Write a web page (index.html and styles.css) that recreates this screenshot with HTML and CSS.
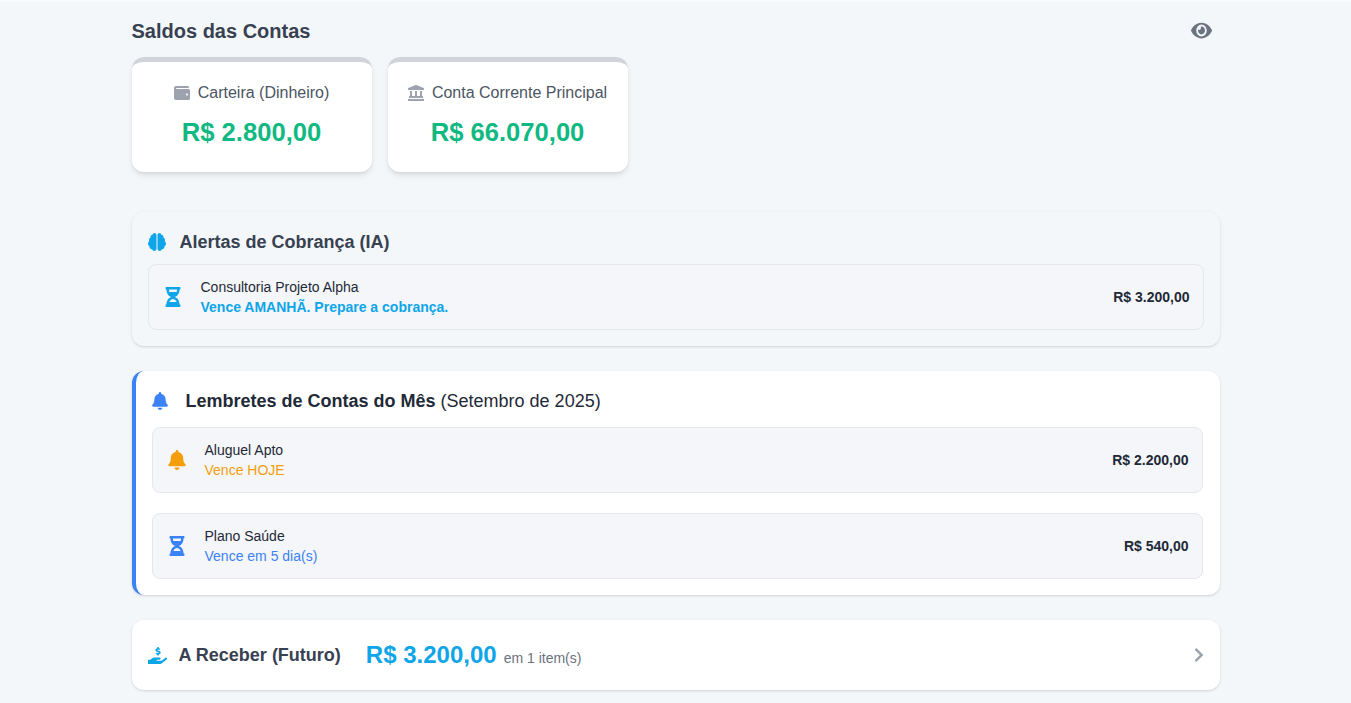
FILE: index.html
```html
<!DOCTYPE html>
<html lang="pt-BR">
<head>
    <meta charset="UTF-8">
    <title>Saldos das Contas</title>
    <link rel="stylesheet" href="styles.css">
</head>
<body>
    <div class="top-edge"></div>
    <main class="container">
        <div class="balance-head">
            <h2>Saldos das Contas</h2>
            <svg class="eye" viewBox="0 0 576 512" preserveAspectRatio="none"><path d="M572.52 241.4C518.29 135.59 410.93 64 288 64S57.68 135.64 3.48 241.41a32.35 32.35 0 0 0 0 29.19C57.71 376.41 165.07 448 288 448s230.32-71.64 284.52-177.41a32.35 32.35 0 0 0 0-29.19zM288 400a144 144 0 1 1 144-144 143.93 143.93 0 0 1-144 144zm0-240a95.31 95.31 0 0 0-25.31 3.79 47.85 47.85 0 0 1-66.9 66.9A95.78 95.78 0 1 0 288 160z"/></svg>
        </div>

        <div class="balances">
            <div class="balance-card">
                <p class="balance-name">
                    <svg class="icon-sm" viewBox="0 0 512 512"><path d="M461.2 128H80c-8.84 0-16-7.16-16-16s7.16-16 16-16h384c8.84 0 16-7.16 16-16 0-26.51-21.49-48-48-48H64C28.65 32 0 60.65 0 96v320c0 35.35 28.65 64 64 64h397.2c28.02 0 50.8-21.53 50.8-48V176c0-26.47-22.78-48-50.8-48zM416 336c-17.67 0-32-14.33-32-32s14.33-32 32-32 32 14.33 32 32-14.33 32-32 32z"/></svg>
                    Carteira (Dinheiro)
                </p>
                <p class="balance-value">R$ 2.800,00</p>
            </div>
            <div class="balance-card">
                <p class="balance-name">
                    <svg class="icon-sm" viewBox="0 0 512 512"><path d="M501.62 92.11L267.24 2.04a31.958 31.958 0 0 0-22.47 0L10.38 92.11A16.001 16.001 0 0 0 0 107.09V144c0 8.84 7.16 16 16 16h480c8.84 0 16-7.16 16-16v-36.91c0-6.67-4.14-12.64-10.38-14.98zM64 192v160H48c-8.84 0-16 7.16-16 16v48h448v-48c0-8.84-7.16-16-16-16h-16V192h-64v160h-96V192h-64v160h-96V192H64zm432 256H16c-8.84 0-16 7.16-16 16v32c0 8.84 7.16 16 16 16h480c8.84 0 16-7.16 16-16v-32c0-8.84-7.16-16-16-16z"/></svg>
                    Conta Corrente Principal
                </p>
                <p class="balance-value">R$ 66.070,00</p>
            </div>
        </div>

        <section class="panel panel-alerts">
            <h3 class="panel-title">
                <svg class="icon-title sky" viewBox="0 0 576 512" preserveAspectRatio="none"><path d="M208 0c-29.9 0-54.7 20.5-61.8 48.2-.8 0-1.4-.2-2.2-.2-35.3 0-64 28.7-64 64 0 4.8.6 9.5 1.7 14C52.5 138 32 166.6 32 200c0 12.6 3.2 24.3 8.3 34.9C16.3 248.7 0 274.3 0 304c0 33.3 20.4 61.9 49.4 73.9-.9 4.6-1.4 9.3-1.4 14.1 0 39.8 32.2 72 72 72 4.1 0 8.1-.5 12-1.2 9.6 28.5 36.2 49.2 68 49.2 39.8 0 72-32.2 72-72V64c0-35.3-28.7-64-64-64zm368 304c0-29.7-16.3-55.3-40.3-69.1 5.2-10.6 8.3-22.3 8.3-34.9 0-33.4-20.5-62-49.7-74 1-4.5 1.7-9.2 1.7-14 0-35.3-28.7-64-64-64-.8 0-1.5.2-2.2.2C422.7 20.5 397.9 0 368 0c-35.3 0-64 28.6-64 64v376c0 39.8 32.2 72 72 72 31.8 0 58.4-20.7 68-49.2 3.9.7 7.9 1.2 12 1.2 39.8 0 72-32.2 72-72 0-4.8-.5-9.5-1.4-14.1 29-12 49.4-40.6 49.4-73.9z"/></svg>
                <span>Alertas de Cobrança (IA)</span>
            </h3>
            <div class="item">
                <svg class="icon-item sky" viewBox="0 0 384 512"><path d="M360 0H24C10.745 0 0 10.745 0 24v16c0 13.255 10.745 24 24 24 0 90.965 51.016 167.734 120.842 192C75.016 280.266 24 357.035 24 448c-13.255 0-24 10.745-24 24v16c0 13.255 10.745 24 24 24h336c13.255 0 24-10.745 24-24v-16c0-13.255-10.745-24-24-24 0-90.965-51.016-167.734-120.842-192C308.984 231.734 360 154.965 360 64c13.255 0 24-10.745 24-24V24c0-13.255-10.745-24-24-24zm-75.078 384H99.08c17.059-46.797 52.096-80 92.92-80 40.821 0 75.862 33.196 92.922 80zm.019-256H99.078C91.988 108.548 88 86.748 88 64h208c0 22.805-3.987 44.587-11.059 64z"/></svg>
                <div class="item-text">
                    <p class="item-name">Consultoria Projeto Alpha</p>
                    <p class="item-due sky-text strong">Vence AMANHÃ. Prepare a cobrança.</p>
                </div>
                <span class="item-amount">R$ 3.200,00</span>
            </div>
        </section>

        <section class="panel panel-reminders">
            <h3 class="panel-title dark">
                <svg class="icon-bell blue" viewBox="0 0 448 512"><path d="M224 512c35.32 0 63.97-28.65 63.97-64H160.03c0 35.35 28.65 64 63.97 64zm215.39-149.71c-19.32-20.76-55.47-51.99-55.47-154.29 0-77.7-54.48-139.9-127.94-155.16V32c0-17.67-14.32-32-31.98-32s-31.98 14.33-31.98 32v20.84C118.56 68.1 64.08 130.3 64.08 208c0 102.3-36.15 133.53-55.47 154.29-6 6.45-8.66 14.16-8.61 21.71.11 16.4 12.98 32 32.1 32h383.8c19.12 0 32-15.6 32.1-32 .05-7.55-2.61-15.27-8.61-21.71z"/></svg>
                <span>Lembretes de Contas do Mês <span class="month">(Setembro de 2025)</span></span>
            </h3>
            <div class="item">
                <svg class="icon-item amber" viewBox="0 0 448 512"><path d="M224 512c35.32 0 63.97-28.65 63.97-64H160.03c0 35.35 28.65 64 63.97 64zm215.39-149.71c-19.32-20.76-55.47-51.99-55.47-154.29 0-77.7-54.48-139.9-127.94-155.16V32c0-17.67-14.32-32-31.98-32s-31.98 14.33-31.98 32v20.84C118.56 68.1 64.08 130.3 64.08 208c0 102.3-36.15 133.53-55.47 154.29-6 6.45-8.66 14.16-8.61 21.71.11 16.4 12.98 32 32.1 32h383.8c19.12 0 32-15.6 32.1-32 .05-7.55-2.61-15.27-8.61-21.71z"/></svg>
                <div class="item-text">
                    <p class="item-name">Aluguel Apto</p>
                    <p class="item-due amber-text">Vence HOJE</p>
                </div>
                <span class="item-amount">R$ 2.200,00</span>
            </div>
            <div class="item">
                <svg class="icon-item blue" viewBox="0 0 384 512"><path d="M360 0H24C10.745 0 0 10.745 0 24v16c0 13.255 10.745 24 24 24 0 90.965 51.016 167.734 120.842 192C75.016 280.266 24 357.035 24 448c-13.255 0-24 10.745-24 24v16c0 13.255 10.745 24 24 24h336c13.255 0 24-10.745 24-24v-16c0-13.255-10.745-24-24-24 0-90.965-51.016-167.734-120.842-192C308.984 231.734 360 154.965 360 64c13.255 0 24-10.745 24-24V24c0-13.255-10.745-24-24-24zm-75.078 384H99.08c17.059-46.797 52.096-80 92.92-80 40.821 0 75.862 33.196 92.922 80zm.019-256H99.078C91.988 108.548 88 86.748 88 64h208c0 22.805-3.987 44.587-11.059 64z"/></svg>
                <div class="item-text">
                    <p class="item-name">Plano Saúde</p>
                    <p class="item-due blue-text">Vence em 5 dia(s)</p>
                </div>
                <span class="item-amount">R$ 540,00</span>
            </div>
        </section>

        <section class="panel panel-future">
            <svg class="icon-hand sky" viewBox="0 0 576 512"><path d="M271.06,144.3l54.27,14.3a8.59,8.59,0,0,1,6.63,8.1c0,4.6-4.09,8.4-9.12,8.4h-35.6a30,30,0,0,1-11.19-2.2c-5.24-2.2-11.28-1.7-15.3,2l-19,17.5a11.68,11.68,0,0,0-2.25,2.66,11.42,11.42,0,0,0,3.88,15.74,83.77,83.77,0,0,0,34.51,11.5V240c0,8.8,7.83,16,17.37,16h17.37c9.55,0,17.38-7.2,17.38-16V222.4c32.93-3.6,57.84-31,53.5-63-3.15-23-22.46-41.3-46.56-47.7L282.68,97.4a8.59,8.59,0,0,1-6.63-8.1c0-4.6,4.09-8.4,9.12-8.4h35.6A30,30,0,0,1,332,83.1c5.23,2.2,11.28,1.7,15.3-2l19-17.5A11.31,11.31,0,0,0,368.47,61a11.43,11.43,0,0,0-3.84-15.78,83.82,83.82,0,0,0-34.52-11.5V16c0-8.8-7.82-16-17.37-16H295.37C285.82,0,278,7.2,278,16V33.6c-32.89,3.6-57.85,31-53.51,63C227.63,119.6,247,137.9,271.06,144.3ZM565.27,328.1c-11.8-10.7-30.2-10-42.6,0L430.27,402a63.64,63.64,0,0,1-40,14H272a16,16,0,0,1,0-32h78.29c15.9,0,30.71-10.9,33.25-26.6a31.2,31.2,0,0,0,.46-5.46A32,32,0,0,0,352,320H192a117.66,117.66,0,0,0-74.1,26.29L71.4,384H16A16,16,0,0,0,0,400v96a16,16,0,0,0,16,16H372.77a64,64,0,0,0,40-14L564,377a32,32,0,0,0,1.28-48.9Z"/></svg>
            <span class="future-label">A Receber (Futuro)</span>
            <span class="future-value">R$ 3.200,00</span>
            <span class="future-count">em 1 item(s)</span>
            <svg class="chevron" viewBox="0 0 320 512" preserveAspectRatio="none"><path d="M285.476 272.971L91.132 467.314c-9.373 9.373-24.569 9.373-33.941 0l-22.667-22.667c-9.357-9.357-9.375-24.522-.04-33.901L188.505 256 34.484 101.255c-9.335-9.379-9.317-24.544.04-33.901l22.667-22.667c9.373-9.373 24.569-9.373 33.941 0L285.475 239.03c9.373 9.372 9.373 24.568.001 33.941z"/></svg>
        </section>
    </main>
</body>
</html>
```

FILE: styles.css
```css
* {
    box-sizing: border-box;
}
body {
    font-family: "Liberation Sans", Arial, sans-serif;
    background-color: #f4f7f9;
    color: #374151;
    margin: 0;
}
p, h2, h3 {
    margin: 0;
}
svg {
    fill: currentColor;
    flex-shrink: 0;
}
.top-edge {
    height: 2px;
    background-color: #f9fafb;
}
.container {
    max-width: 1088px;
    margin: 0 auto;
    padding-top: 16px;
    padding-bottom: 13px;
}

.balance-head {
    display: flex;
    justify-content: space-between;
    align-items: center;
    height: 26px;
    margin-bottom: 13px;
}
.balance-head h2 {
    font-size: 20px;
    font-weight: 700;
    color: #374151;
}
.eye {
    width: 21px;
    height: 21px;
    margin-right: 8px;
    margin-bottom: 2px;
    color: #6b7280;
}

.balances {
    display: flex;
    gap: 16px;
    margin-bottom: 40px;
}
.balance-card {
    width: 240px;
    height: 115px;
    padding: 21px 0 0;
    background-color: #fff;
    border-top: 5px solid #d1d5db;
    border-radius: 12px;
    box-shadow: 0 4px 6px -1px rgba(0, 0, 0, .1), 0 2px 4px -2px rgba(0, 0, 0, .1);
    text-align: center;
}
.balance-name {
    display: flex;
    justify-content: center;
    align-items: center;
    gap: 8px;
    height: 20px;
    font-size: 16px;
    color: #4b5563;
}
.icon-sm {
    width: 16px;
    height: 16px;
    color: #9ca3af;
}
.balance-value {
    margin-top: 14px;
    font-size: 25.6px;
    line-height: 30px;
    font-weight: 700;
    color: #10b981;
}

.panel {
    border-radius: 12px;
    box-shadow: 0 1px 3px rgba(0, 0, 0, .12), 0 1px 2px -1px rgba(0, 0, 0, .1);
}
.panel-alerts {
    height: 134px;
    padding: 16px;
    margin-bottom: 25px;
}
.panel-reminders {
    height: 224px;
    padding: 16px 17px 16px 16px;
    margin-bottom: 25px;
    background-color: #fff;
    border-left: 4px solid #3b82f6;
}
.panel-title {
    display: flex;
    align-items: center;
    height: 28px;
    margin-bottom: 8px;
    font-size: 18px;
    font-weight: 700;
    color: #374151;
}
.panel-title.dark {
    margin-bottom: 12px;
    color: #1f2937;
}
.month {
    font-weight: 400;
}
.icon-title {
    width: 18px;
    height: 18px;
    margin-right: 14px;
}
.icon-bell {
    width: 16px;
    height: 18px;
    margin-right: 18px;
}

.item {
    display: flex;
    align-items: center;
    height: 66px;
    padding: 0 13px;
    background-color: #f4f6f9;
    border: 1px solid #e5e7eb;
    border-radius: 8px;
    margin-bottom: 20px;
}
.item:last-child {
    margin-bottom: 0;
}
.icon-item {
    width: 20px;
    height: 20px;
    margin-right: 18px;
    margin-left: 1px;
}
.item-text {
    flex: 1;
}
.item-name {
    font-size: 14px;
    line-height: 20px;
    color: #1f2937;
}
.item-due {
    font-size: 14px;
    line-height: 20px;
}
.strong {
    font-weight: 700;
}
.item-amount {
    font-size: 14px;
    font-weight: 700;
    color: #1f2937;
}
.sky, .sky-text {
    color: #0ea5e9;
}
.amber, .amber-text {
    color: #f59e0b;
}
.blue, .blue-text {
    color: #3b82f6;
}

.panel-future {
    display: flex;
    align-items: center;
    height: 70px;
    padding: 0 16px;
    background-color: #fff;
}
.icon-hand {
    width: 19px;
    height: 17px;
    margin-right: 12px;
}
.future-label {
    font-size: 18px;
    font-weight: 700;
    color: #374151;
}
.future-value {
    margin-left: 25px;
    font-size: 24px;
    font-weight: 700;
    color: #0ea5e9;
}
.future-count {
    margin-left: 7px;
    margin-top: 6px;
    font-size: 14px;
    color: #6b7280;
}
.chevron {
    width: 10px;
    height: 16px;
    margin-left: auto;
    color: #9ca3af;
}
```
